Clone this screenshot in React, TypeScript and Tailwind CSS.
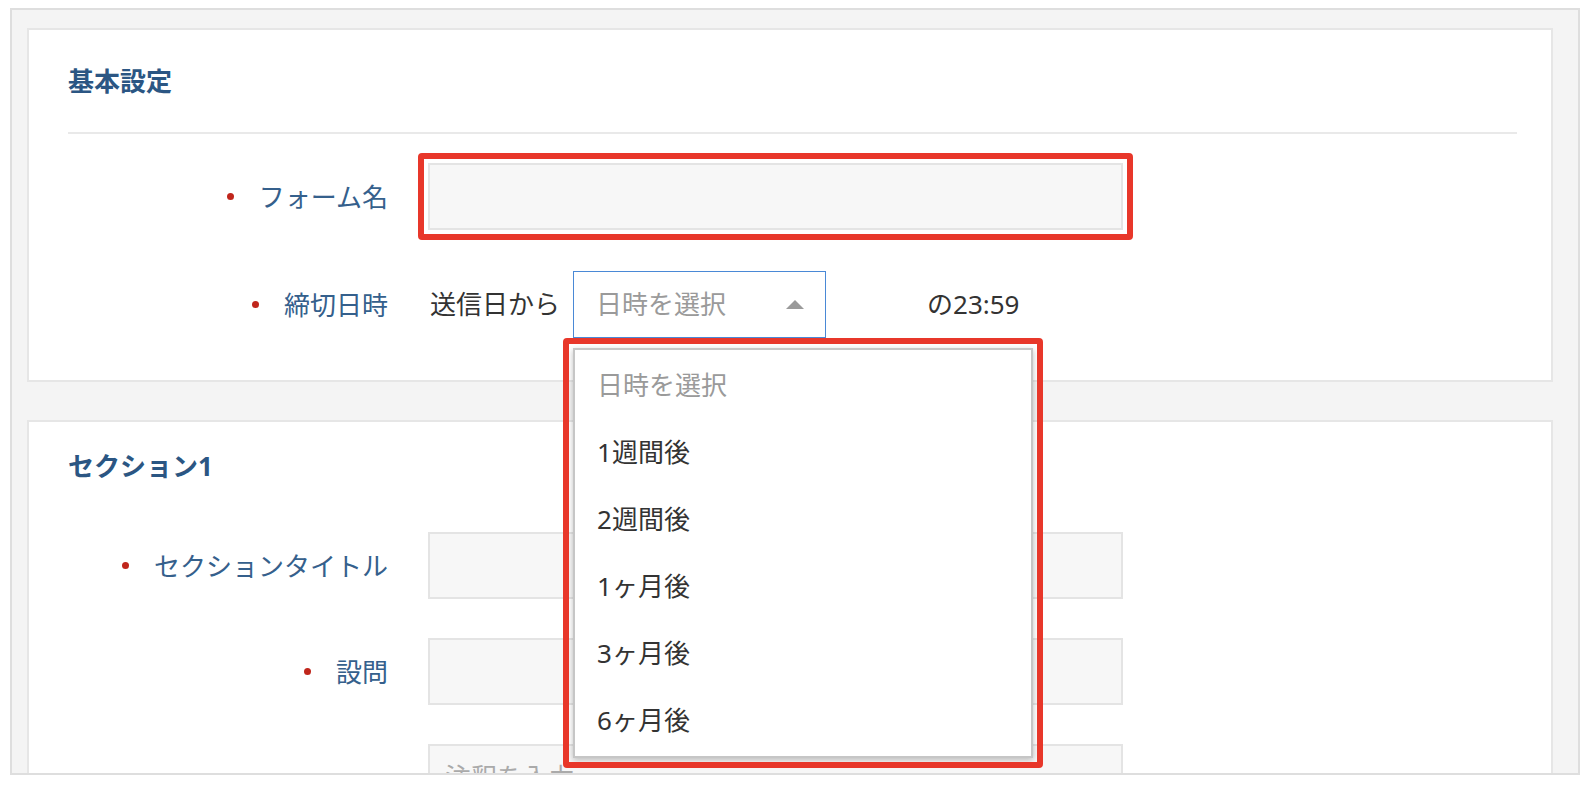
const DEADLINE_OPTIONS = ["1週間後", "2週間後", "1ヶ月後", "3ヶ月後", "6ヶ月後"];

function Label({ text }: { text: string }) {
  return (
    <div className="w-[320px] shrink-0 flex items-center justify-end text-[26px] leading-[40px] text-[#35608c]">
      <span className="mr-[25px] h-[7px] w-[7px] rounded-full bg-[#c0261c]" />
      {text}
    </div>
  );
}

function TextBox({ placeholder }: { placeholder?: string }) {
  return (
    <div className="w-[695px] h-[67px] border-2 border-[#e4e4e4] bg-[#f7f7f7] flex items-center pl-[15px] text-[26px] text-[#aaaaaa]">
      {placeholder}
    </div>
  );
}

export default function App() {
  return (
    <div className="min-h-screen bg-white pt-[8px] pl-[10px] pr-[12px] font-['Noto_Sans','Noto_Sans_CJK_JP',sans-serif]">
      <div className="h-[767px] overflow-hidden border-2 border-[#dedede] bg-[#f4f4f4] pt-[18px] pl-[15px] pr-[25px]">
        {/* basic settings */}
        <section className="border-2 border-[#e6e6e6] bg-white pl-[39px] pr-[34px] pt-[31px] pb-[42px]">
          <h2 className="text-[26px] leading-[40px] font-bold text-[#2b5683]">基本設定</h2>
          <div className="mt-[31px] h-[2px] bg-[#e9e9e9]" />

          <div className="mt-[29px] flex flex-col gap-[41px]">
            <div className="flex items-center gap-[40px]">
              <Label text="フォーム名" />
              <div className="relative">
                <TextBox />
                <div className="pointer-events-none absolute -inset-[10px] rounded-[4px] border-[6px] border-[#e8372a]" />
              </div>
            </div>

            <div className="flex items-center gap-[40px]">
              <Label text="締切日時" />
              <div className="flex items-center pl-[2px] text-[26px] text-[#333333]">
                <span>送信日から</span>
                <div className="relative ml-[13px]">
                  <div className="w-[253px] h-[67px] border-[1.5px] border-[#4a89d6] bg-white flex items-center justify-between pl-[22px] pr-[21px] text-[#9a9a9a]">
                    <span>日時を選択</span>
                    <svg width="18" height="9" viewBox="0 0 18 9">
                      <polygon points="0,9 9,0 18,9" fill="#9a9a9a" />
                    </svg>
                  </div>

                  {/* open dropdown */}
                  <div className="absolute left-0 top-[77px] z-10 w-[460px]">
                    <div className="border-2 border-[#c6c6c6] bg-white py-[2px] shadow-[0_2px_6px_rgba(0,0,0,0.25)]">
                      <div className="h-[67px] flex items-center pl-[22px] text-[#9a9a9a]">日時を選択</div>
                      {DEADLINE_OPTIONS.map((opt) => (
                        <div key={opt} className="h-[67px] flex items-center pl-[22px] text-[#333333]">
                          {opt}
                        </div>
                      ))}
                    </div>
                    <div className="pointer-events-none absolute -inset-[10px] rounded-[4px] border-[6px] border-[#e8372a]" />
                  </div>
                </div>
                <span className="ml-[101px]">の23:59</span>
              </div>
            </div>
          </div>
        </section>

        {/* section 1 */}
        <section className="mt-[38px] border-2 border-[#e6e6e6] bg-white pl-[39px] pr-[34px] pt-[24px] pb-[40px]">
          <h2 className="text-[26px] leading-[40px] font-bold text-[#2b5683]">セクション1</h2>
          <div className="mt-[46px] flex flex-col gap-[39px]">
            <div className="flex items-center gap-[40px]">
              <Label text="セクションタイトル" />
              <TextBox />
            </div>
            <div className="flex items-center gap-[40px]">
              <Label text="設問" />
              <TextBox />
            </div>
            <div className="flex items-center gap-[40px]">
              <div className="w-[320px] shrink-0" />
              <TextBox placeholder="注釈を入力" />
            </div>
          </div>
        </section>
      </div>
    </div>
  );
}
